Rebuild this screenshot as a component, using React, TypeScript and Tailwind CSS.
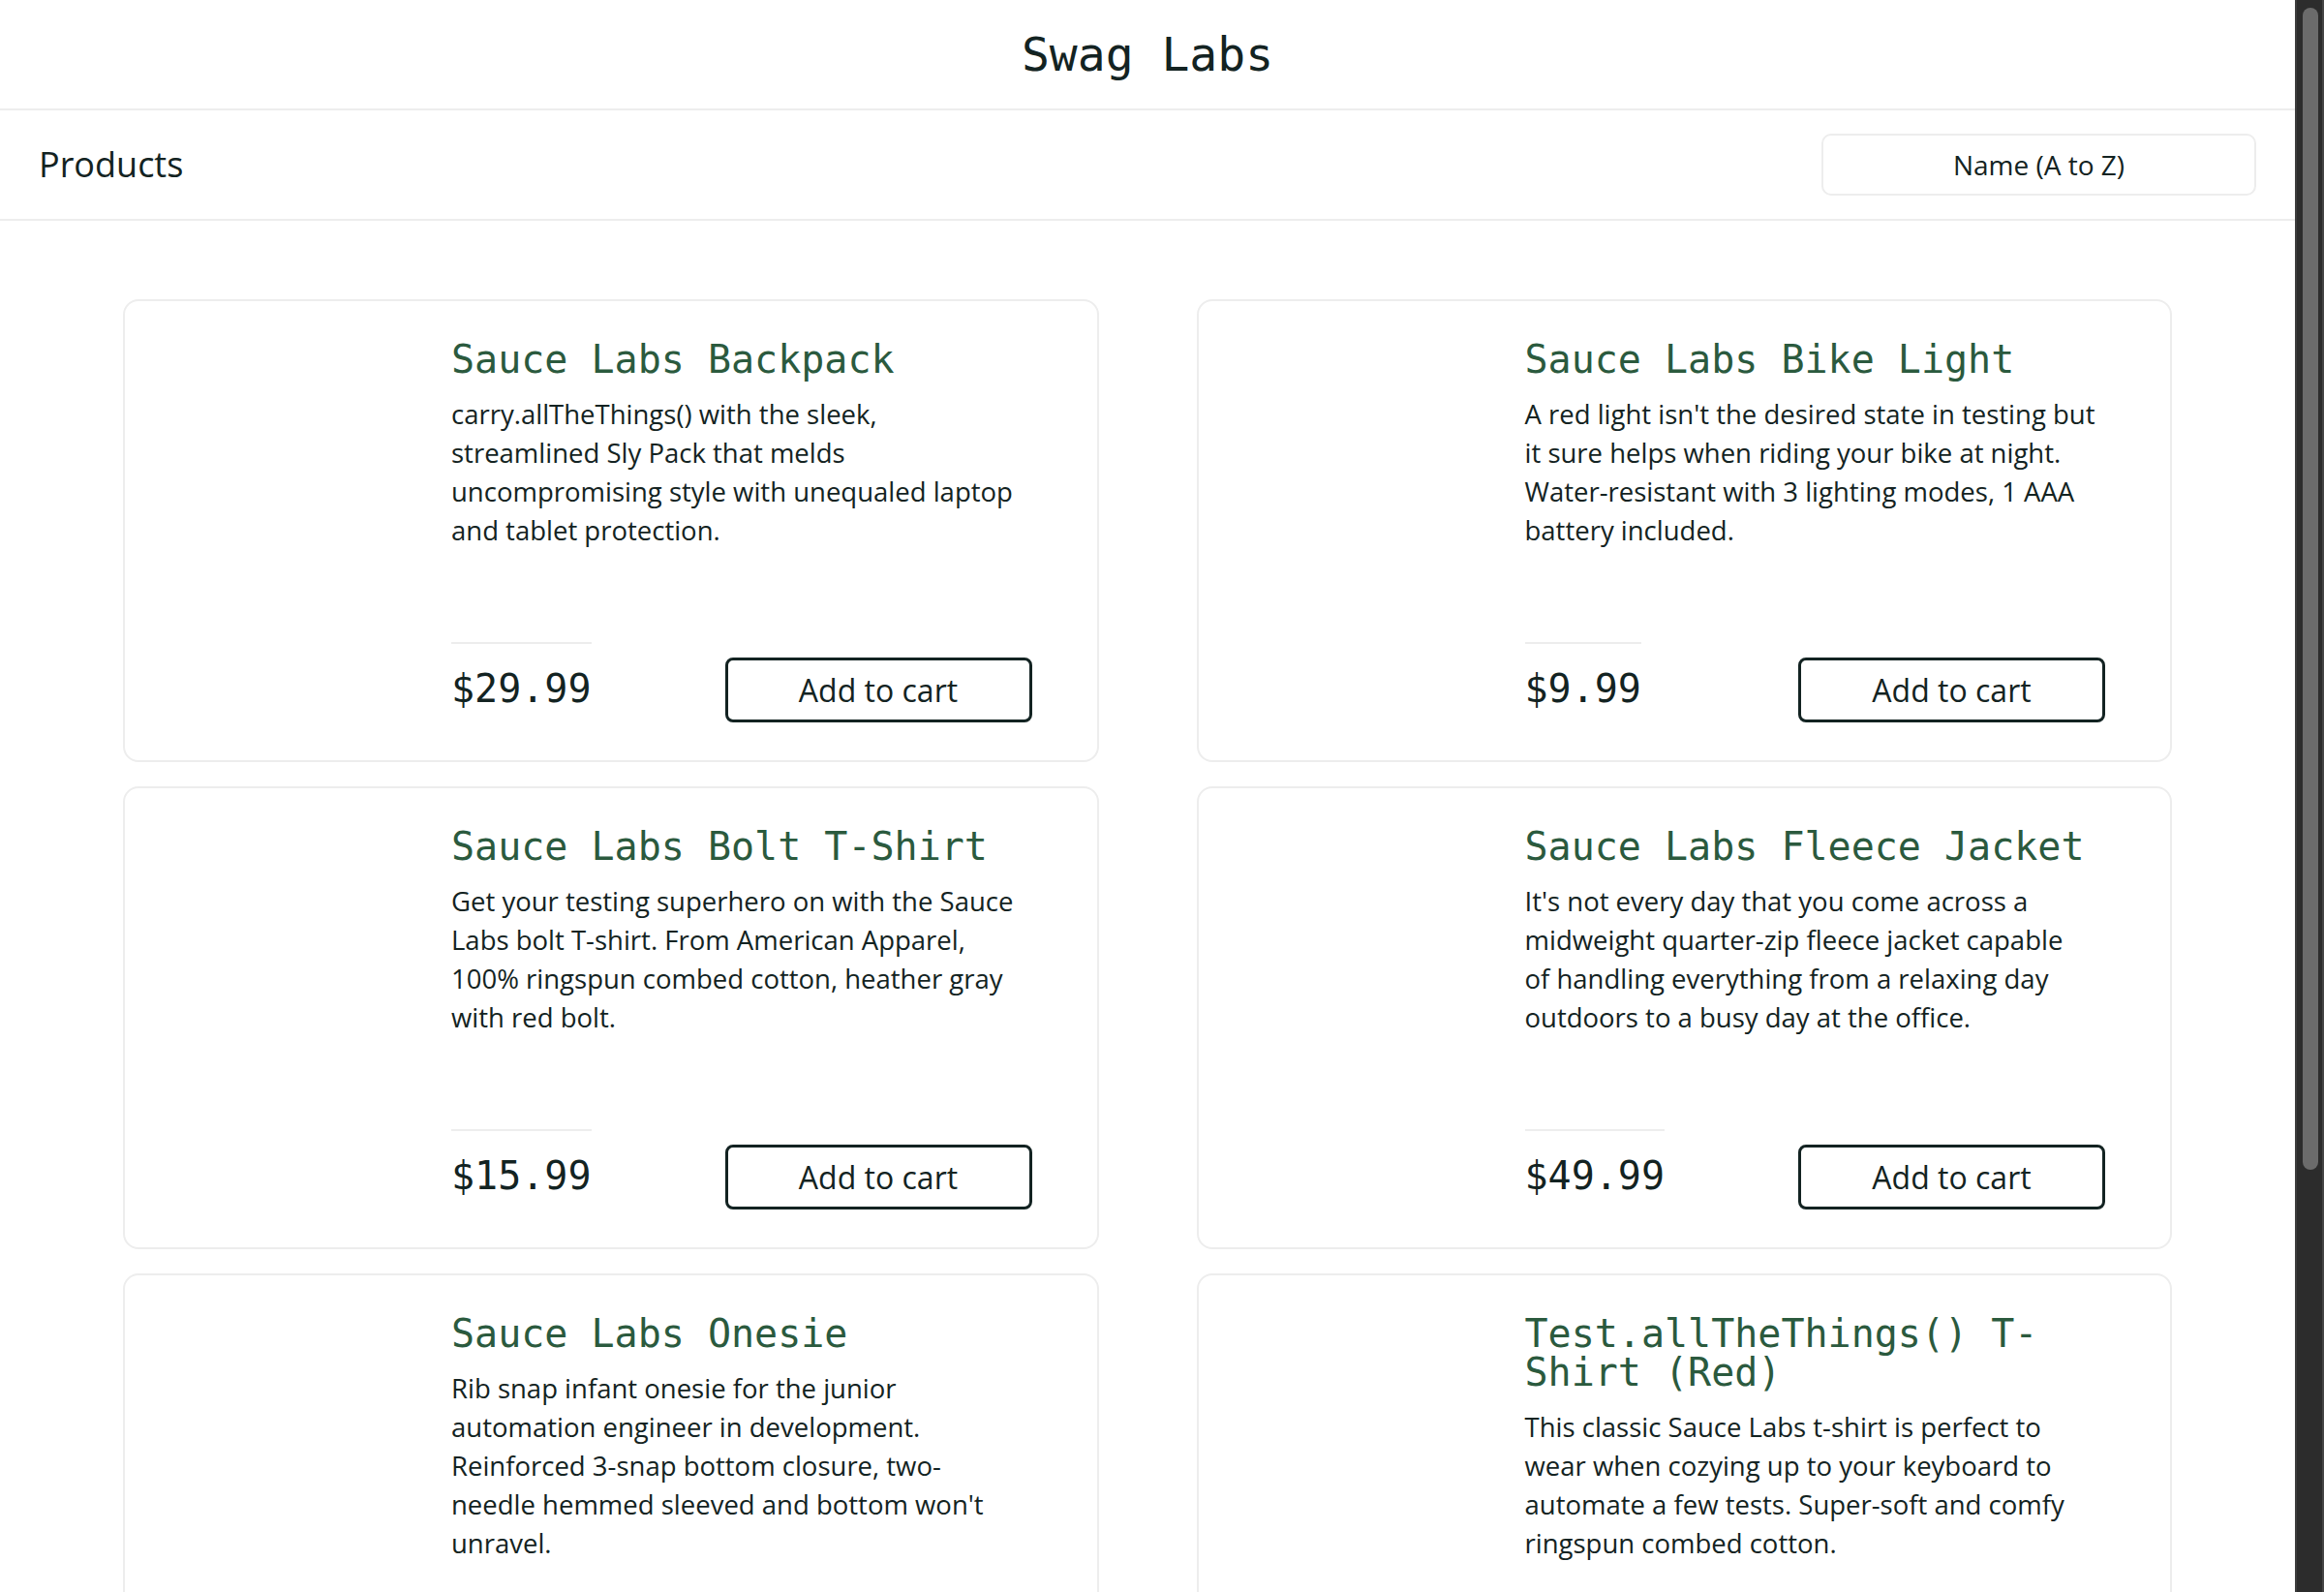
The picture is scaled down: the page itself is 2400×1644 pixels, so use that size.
type Product = {
  name: string;
  lines: string[];
  price: string;
};

const products: Product[] = [
  {
    name: "Sauce Labs Backpack",
    lines: [
      "carry.allTheThings() with the sleek,",
      "streamlined Sly Pack that melds",
      "uncompromising style with unequaled laptop",
      "and tablet protection.",
    ],
    price: "$29.99",
  },
  {
    name: "Sauce Labs Bike Light",
    lines: [
      "A red light isn't the desired state in testing but",
      "it sure helps when riding your bike at night.",
      "Water-resistant with 3 lighting modes, 1 AAA",
      "battery included.",
    ],
    price: "$9.99",
  },
  {
    name: "Sauce Labs Bolt T-Shirt",
    lines: [
      "Get your testing superhero on with the Sauce",
      "Labs bolt T-shirt. From American Apparel,",
      "100% ringspun combed cotton, heather gray",
      "with red bolt.",
    ],
    price: "$15.99",
  },
  {
    name: "Sauce Labs Fleece Jacket",
    lines: [
      "It's not every day that you come across a",
      "midweight quarter-zip fleece jacket capable",
      "of handling everything from a relaxing day",
      "outdoors to a busy day at the office.",
    ],
    price: "$49.99",
  },
  {
    name: "Sauce Labs Onesie",
    lines: [
      "Rib snap infant onesie for the junior",
      "automation engineer in development.",
      "Reinforced 3-snap bottom closure, two-",
      "needle hemmed sleeved and bottom won't",
      "unravel.",
    ],
    price: "$7.99",
  },
  {
    name: "Test.allTheThings() T-Shirt (Red)",
    lines: [
      "This classic Sauce Labs t-shirt is perfect to",
      "wear when cozying up to your keyboard to",
      "automate a few tests. Super-soft and comfy",
      "ringspun combed cotton.",
    ],
    price: "$15.99",
  },
];

const mono = "font-['DejaVu_Sans_Mono',monospace]";
const sans = "font-['Open_Sans',sans-serif]";

const ProductCard = ({ name, lines, price }: Product) => (
  <div className="flex rounded-[16px] border-2 border-[#ededed] bg-white pt-[40px] pr-[67px] pb-[39px] pl-[40px]">
    {/* image did not load, keep the empty slot */}
    <div className="mr-[38px] w-[259px] shrink-0" />
    <div className="flex min-w-0 flex-1 flex-col">
      <div className={`${mono} text-[40px] leading-[40px] text-[#2b5a3e]`}>{name}</div>
      <div className={`${sans} mt-[17px] text-[27.5px] leading-[40px] text-[#132322]`}>
        {lines.map((line) => (
          <div key={line} className="whitespace-nowrap">
            {line}
          </div>
        ))}
      </div>
      <div className="flex items-end justify-between pt-[95px]">
        <div
          className={`${mono} border-t-2 border-[#ededed] pt-[22px] pb-[11px] text-[40px] leading-[48px] text-[#132322]`}
        >
          {price}
        </div>
        <button
          className={`${sans} h-[67px] w-[317px] rounded-[8px] border-[3px] border-[#132322] bg-white text-[32px] font-medium text-[#132322]`}
        >
          Add to cart
        </button>
      </div>
    </div>
  </div>
);

export default function App() {
  return (
    <div className="flex h-screen w-full overflow-hidden bg-white">
      <div className="min-w-0 flex-1">
        <div className="flex h-[114px] items-center justify-center border-b-2 border-[#ededed]">
          <span className={`${mono} text-[48px] text-[#132322]`}>Swag Labs</span>
        </div>
        <div className="flex h-[114px] items-center justify-between border-b-2 border-[#ededed] px-[40px]">
          <span className={`${sans} text-[36px] font-medium text-[#132322]`}>Products</span>
          <div
            className={`${sans} flex h-[64px] w-[449px] items-center justify-center rounded-[10px] border-2 border-[#ededed] text-[28px] text-[#132322]`}
          >
            Name (A to Z)
          </div>
        </div>
        <div className="grid grid-cols-2 gap-x-[101px] gap-y-[25px] px-[127px] pt-[81px]">
          {products.map((p) => (
            <ProductCard key={p.name} {...p} />
          ))}
        </div>
      </div>
      <div className="w-[30px] shrink-0 border-r-2 border-l-2 border-r-[#444444] border-l-[#3c3c3c] bg-[#2c2c2c] pt-[8px] pl-[6px]">
        <div className="h-[1200px] w-[16px] rounded-full bg-[#6b6b6b]" />
      </div>
    </div>
  );
}
